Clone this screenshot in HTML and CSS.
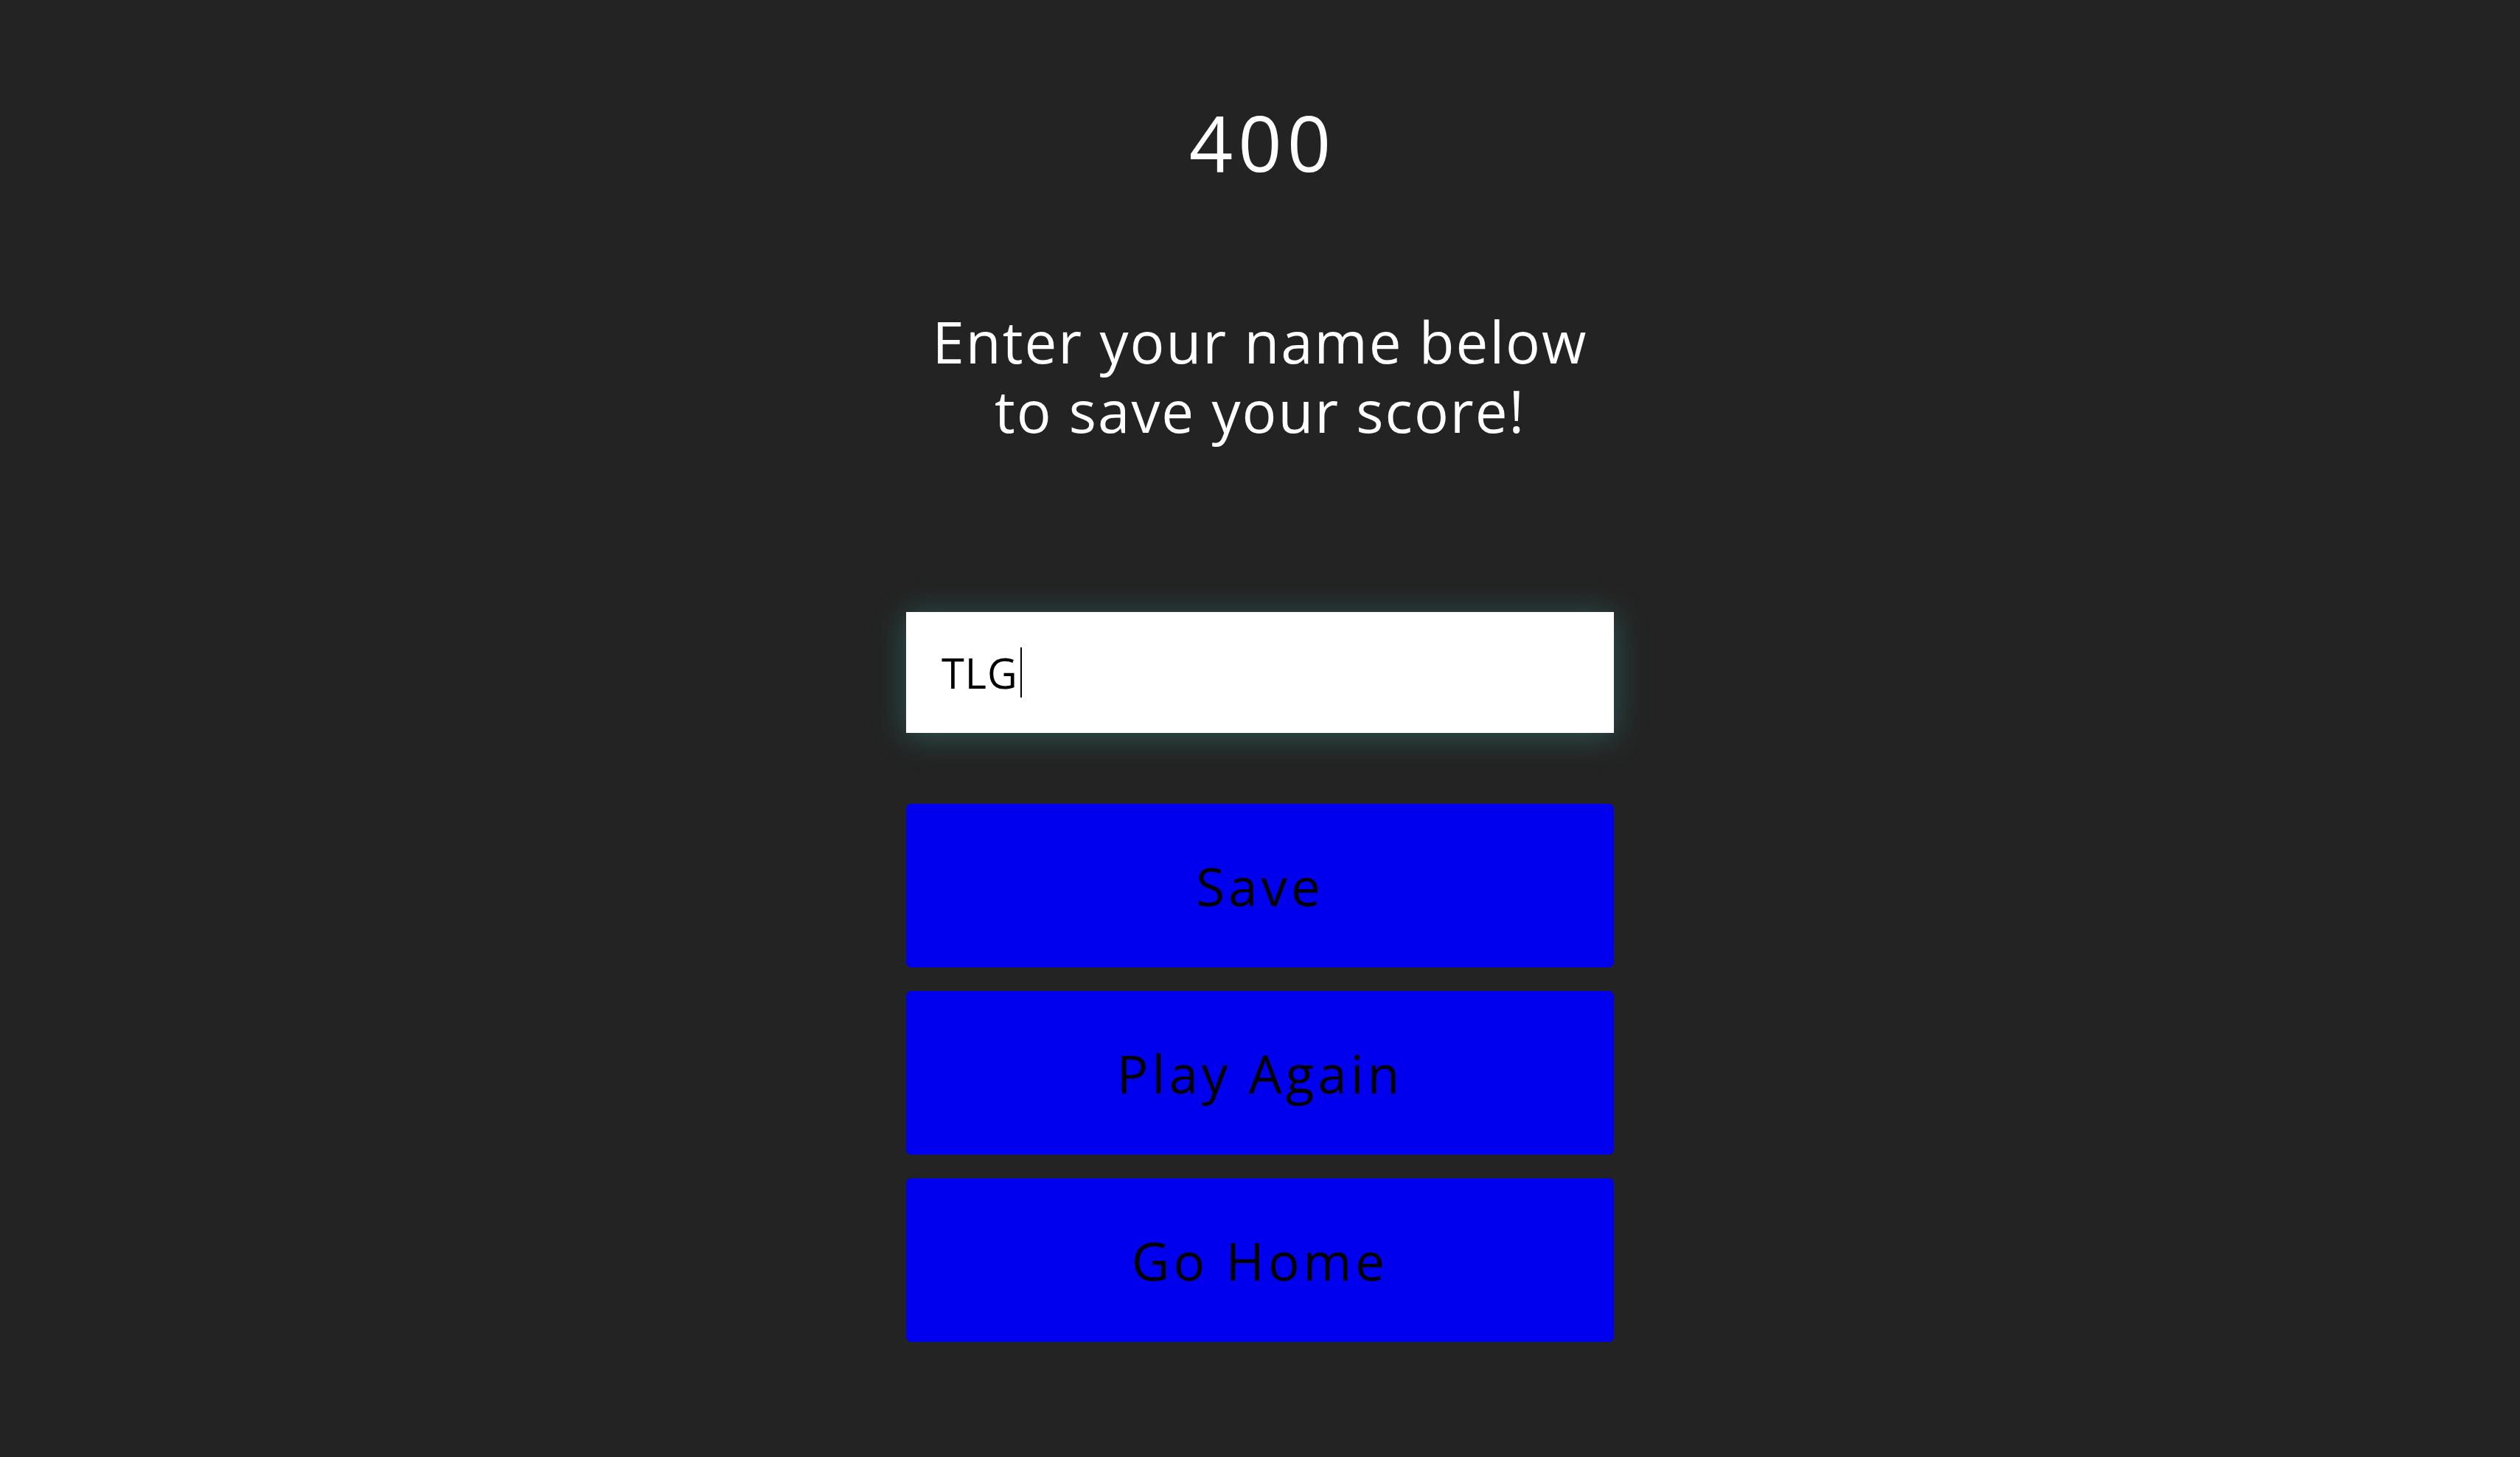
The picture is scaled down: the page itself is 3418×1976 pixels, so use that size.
FILE: index.html
```html
<!DOCTYPE html>
<html lang="en">
<head>
<meta charset="utf-8">
<title>End</title>
<link rel="stylesheet" href="styles.css">
</head>
<body>
<main class="end">
  <h1 class="score">400</h1>
  <div class="prompt">
    <div class="prompt-line">Enter your name below</div>
    <div class="prompt-line">to save your score!</div>
  </div>
  <form class="save-form">
    <div class="name-input"><span class="name-text">TLG</span><span class="caret"></span></div>
    <button type="button" class="btn">Save</button>
    <button type="button" class="btn">Play Again</button>
    <button type="button" class="btn">Go Home</button>
  </form>
</main>
</body>
</html>
```
FILE: styles.css
```css
html, body {
  margin: 0;
  padding: 0;
  background: #232323;
}
body {
  font-family: "Open Sans", "Noto Sans", sans-serif;
  color: #ffffff;
}
.end {
  width: 960px;
  margin: 0 auto;
  display: flex;
  flex-direction: column;
  align-items: center;
  padding-top: 141px;
}
.score {
  margin: 0;
  font-size: 104px;
  line-height: 104px;
  font-weight: 400;
  letter-spacing: 7px;
  padding-left: 7px;
}
.prompt {
  margin: 171px 0 0;
  font-size: 78px;
  text-align: center;
  font-weight: 400;
  letter-spacing: 2px;
  display: flex;
  flex-direction: column;
}
.prompt-line {
  height: 94px;
  line-height: 94px;
  overflow: visible;
}
.save-form {
  margin-top: 226px;
  width: 960px;
  display: flex;
  flex-direction: column;
  gap: 32px;
}
.name-input {
  height: 164px;
  background: #ffffff;
  box-shadow: 0 4px 40px rgba(60, 150, 150, 0.45);
  display: flex;
  align-items: center;
  padding-left: 48px;
  margin-bottom: 64px;
  color: #000000;
  font-size: 56px;
  letter-spacing: 1px;
}
.caret {
  display: inline-block;
  width: 2px;
  height: 68px;
  background: #000;
  margin-left: 3px;
}
.btn {
  height: 222px;
  border: none;
  border-radius: 7px;
  background: #0000ee;
  color: #000000;
  font-family: "Open Sans", "Noto Sans", sans-serif;
  font-size: 71px;
  letter-spacing: 5px;
  padding: 0;
}
```
